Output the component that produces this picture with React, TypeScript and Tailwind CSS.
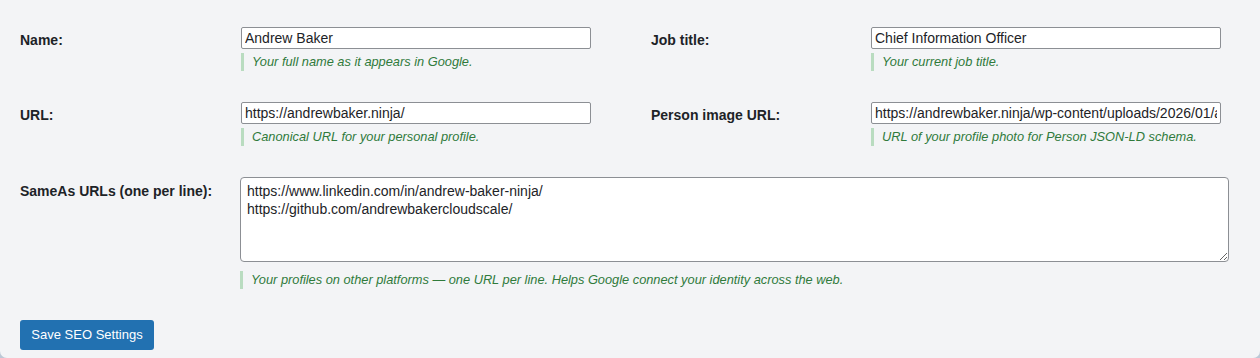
import React from "react";

const font = { fontFamily: '"Liberation Sans", Arial, sans-serif' };

function Help({ children }: { children: React.ReactNode }) {
  return (
    <div className="mt-[4px] h-[18px] border-l-[3px] border-[#b9dcc0] pl-[8px] text-[12.8px] italic leading-[18px] text-[#2f7a3b]">
      {children}
    </div>
  );
}

function Field({
  label,
  value,
  help,
  labelWidth,
}: {
  label: string;
  value: string;
  help: string;
  labelWidth: string;
}) {
  return (
    <div className="flex">
      <div className={`${labelWidth} pt-[3px] text-[14px] font-bold leading-[20px] text-[#1d2327]`}>{label}</div>
      <div className="w-[350px]">
        <input
          readOnly
          value={value}
          className="block h-[22px] w-[350px] rounded-[2px] border border-[#8c8f94] bg-white px-[3px] text-[14px] leading-[20px] text-[#1d2327] outline-none"
          style={font}
        />
        <Help>{help}</Help>
      </div>
    </div>
  );
}

export default function App() {
  return (
    <div className="h-[358px] w-[1260px] bg-[#bcc8d6]" style={font}>
      <div className="h-[358px] w-[1260px] rounded-b-[7px] bg-[#f3f4f6] pl-[20px] pt-[27px]">
        <div className="flex">
          <Field label="Name:" value="Andrew Baker" help="Your full name as it appears in Google." labelWidth="w-[221px]" />
          <div className="ml-[60px]">
            <Field label="Job title:" value="Chief Information Officer" help="Your current job title." labelWidth="w-[220px]" />
          </div>
        </div>
        <div className="mt-[31px] flex">
          <Field label="URL:" value="https://andrewbaker.ninja/" help="Canonical URL for your personal profile." labelWidth="w-[221px]" />
          <div className="ml-[60px]">
            <Field
              label="Person image URL:"
              value="https://andrewbaker.ninja/wp-content/uploads/2026/01/andrew-baker.jpg"
              help="URL of your profile photo for Person JSON-LD schema."
              labelWidth="w-[220px]"
            />
          </div>
        </div>
        <div className="mt-[31px] flex">
          <div className="w-[220px] pt-[4px] text-[14px] font-bold leading-[20px] text-[#1d2327]">SameAs URLs (one per line):</div>
          <div className="w-[989px]">
            <textarea
              readOnly
              value={"https://www.linkedin.com/in/andrew-baker-ninja/\nhttps://github.com/andrewbakercloudscale/"}
              className="block h-[85px] w-[989px] resize-y rounded-[4px] border border-[#8c8f94] bg-white px-[6px] pt-[4px] text-[14px] leading-[18px] text-[#1d2327] outline-none"
              style={font}
            />
            <div className="mt-[9px]">
              <Help>
                Your profiles on other platforms — one URL per line. Helps Google connect your identity across the web.
              </Help>
            </div>
          </div>
        </div>
        <button className="mt-[31px] h-[30px] w-[134px] rounded-[3px] bg-[#2271b1] text-[13px] text-white">
          Save SEO Settings
        </button>
      </div>
    </div>
  );
}
